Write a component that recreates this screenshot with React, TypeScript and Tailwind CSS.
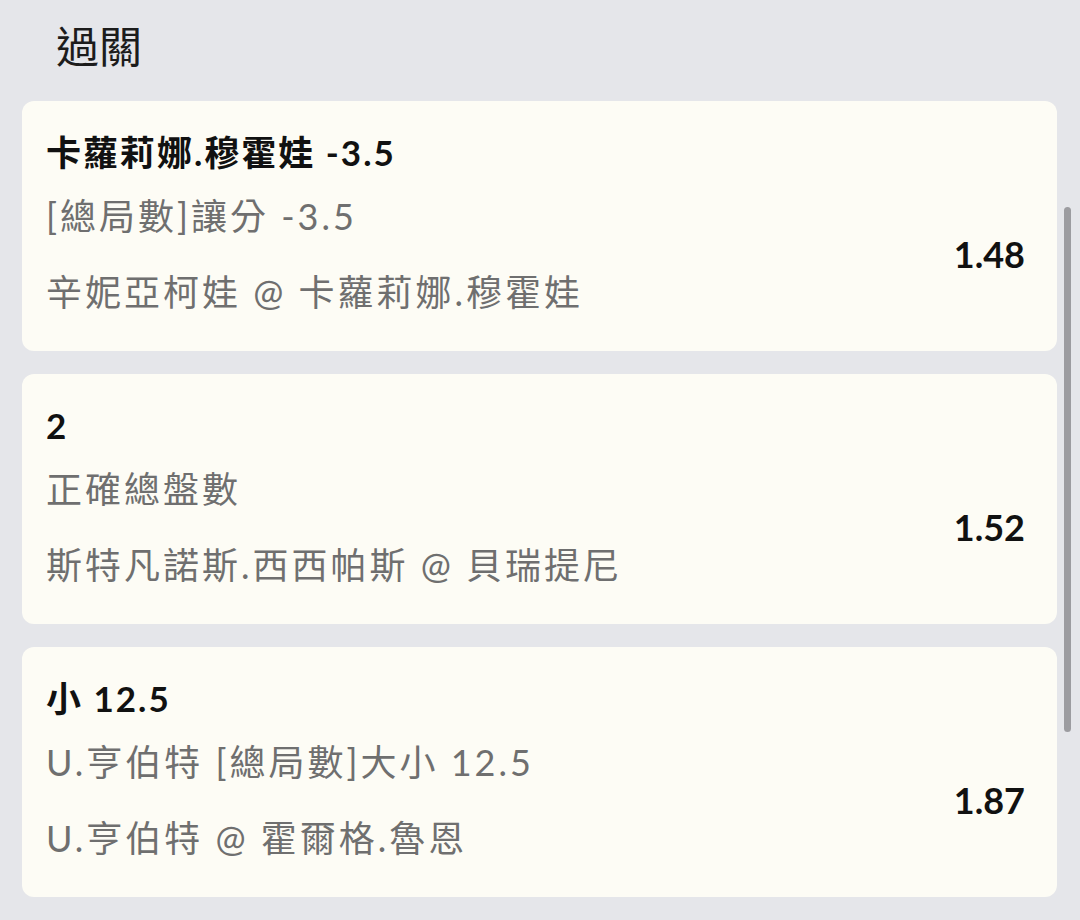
const bets = [
  {
    pick: "卡蘿莉娜.穆霍娃 -3.5",
    market: "[總局數]讓分 -3.5",
    match: "辛妮亞柯娃 @ 卡蘿莉娜.穆霍娃",
    odds: "1.48",
  },
  {
    pick: "2",
    market: "正確總盤數",
    match: "斯特凡諾斯.西西帕斯 @ 貝瑞提尼",
    odds: "1.52",
  },
  {
    pick: "小 12.5",
    market: "U.亨伯特 [總局數]大小 12.5",
    match: "U.亨伯特 @ 霍爾格.魯恩",
    odds: "1.87",
  },
];

const font = "font-['Lato','Noto_Sans_CJK_TC',sans-serif]";

export default function App() {
  return (
    <div className={`relative h-[920px] w-[1080px] overflow-hidden bg-[#e5e6ea] ${font}`}>
      {/* header */}
      <div className="h-[101px] pl-[56px] pt-[19px]">
        <h1 className="text-[43px] leading-[56px] text-[#1c1c1c]">過關</h1>
      </div>

      {/* bet list */}
      <div className="flex flex-col gap-[23px] pl-[22px] pr-[23px]">
        {bets.map((bet) => (
          <div
            key={bet.pick}
            className="h-[250px] shrink-0 rounded-[12px] bg-[#fdfcf5] pl-[24px] pr-[32px] pt-[26px]"
          >
            <div className="text-[35px] font-bold leading-[50px] tracking-[2px] text-[#111]">{bet.pick}</div>
            <div className="flex items-center">
              <div className="flex flex-1 flex-col gap-[26px] pt-[14px]">
                <div className="text-[36px] leading-[50px] tracking-[3px] text-[#6f6f6f]">{bet.market}</div>
                <div className="text-[36px] leading-[50px] tracking-[3px] text-[#6f6f6f]">{bet.match}</div>
              </div>
              <div className="pt-[14px] text-[36px] font-bold text-[#111]">{bet.odds}</div>
            </div>
          </div>
        ))}
        {/* next card, just peeking in at the bottom edge */}
        <div className="h-[250px] shrink-0 rounded-[12px] bg-[#fdfcf5]" />
      </div>

      {/* scrollbar thumb */}
      <div className="absolute left-[1064px] top-[207px] h-[525px] w-[7px] rounded-full bg-[#9c9ca0]" />
    </div>
  );
}
